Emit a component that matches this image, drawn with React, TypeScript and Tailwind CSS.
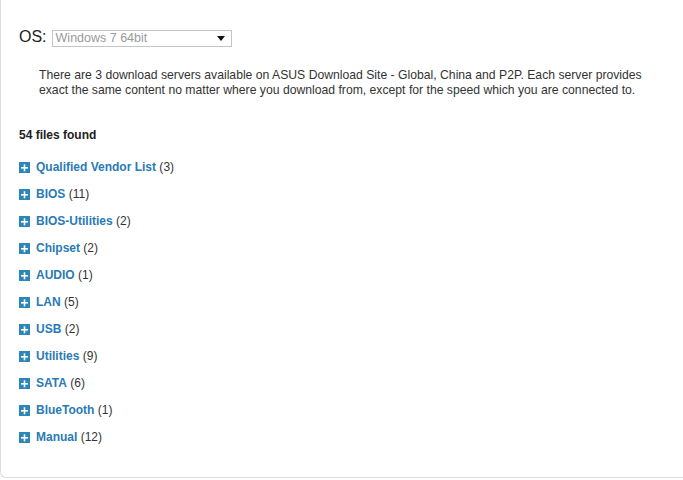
const categories: { name: string; count: number }[] = [
  { name: "Qualified Vendor List", count: 3 },
  { name: "BIOS", count: 11 },
  { name: "BIOS-Utilities", count: 2 },
  { name: "Chipset", count: 2 },
  { name: "AUDIO", count: 1 },
  { name: "LAN", count: 5 },
  { name: "USB", count: 2 },
  { name: "Utilities", count: 9 },
  { name: "SATA", count: 6 },
  { name: "BlueTooth", count: 1 },
  { name: "Manual", count: 12 },
];

function PlusBox() {
  return (
    <span className="flex h-[11px] w-[11px] items-center justify-center bg-[#2c86b8]">
      <svg width="9" height="9" viewBox="0 0 9 9">
        <rect x="1" y="4" width="7" height="1.6" fill="#fff" />
        <rect x="3.7" y="1.3" width="1.6" height="7" fill="#fff" />
      </svg>
    </span>
  );
}

export default function App() {
  return (
    <div className="h-[480px] w-[683px] overflow-hidden bg-white font-['Liberation_Sans',Arial,sans-serif]">
      <div className="h-[478px] rounded-bl-[6px] border-b border-l border-[#dcdcdc] px-[18px] pt-[28px]">
        {/* OS selector */}
        <div className="flex h-[18px] items-center gap-[5px]">
          <span className="text-[16px] leading-[18px] text-[#222]">OS:</span>
          <div className="mt-[2px] flex h-[17px] w-[180px] items-center justify-between border border-[#c5c5c5] pl-[3px] pr-[6px]">
            <span className="text-[12.5px] leading-[15px] text-[#9a9a9a]">Windows 7 64bit</span>
            <svg width="8" height="5" viewBox="0 0 8 5">
              <path d="M0 0 H8 L4 5 Z" fill="#111" />
            </svg>
          </div>
        </div>

        <p className="mt-[22px] w-[640px] pl-[20px] text-[12.2px] leading-[15px] text-[#333]">
          There are 3 download servers available on ASUS Download Site - Global, China and P2P. Each server provides
          exact the same content no matter where you download from, except for the speed which you are connected to.
        </p>

        <div className="mt-[30px] text-[12px] font-bold leading-[15px] text-[#222]">54 files found</div>

        <ul className="mt-[11px] flex flex-col">
          {categories.map((c) => (
            <li key={c.name} className="flex h-[27px] items-center gap-[6px]">
              <PlusBox />
              <span className="text-[12px] leading-[15px]">
                <a href="#" className="font-bold text-[#2a7ab5]">
                  {c.name}
                </a>
                <span className="text-[#333]"> ({c.count})</span>
              </span>
            </li>
          ))}
        </ul>
      </div>
    </div>
  );
}
